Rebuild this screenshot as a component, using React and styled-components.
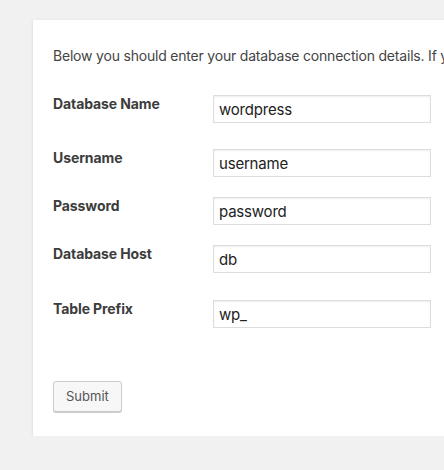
import React from 'react'
import styled, { createGlobalStyle } from 'styled-components'

const Global = createGlobalStyle`
  html { background: #f1f1f1; overflow: hidden; }
  body {
    margin: 0;
    font-family: Inter, "Noto Sans", "Liberation Sans", sans-serif;
    color: #444;
  }
`

const Page = styled.div`
  padding: 20px 0 0 33px;
  width: 1200px;
`

const Card = styled.form`
  background: #fff;
  width: 700px;
  padding: 20px 20px 10px;
  box-shadow: 0 1px 3px rgba(0, 0, 0, 0.13);
`

const Intro = styled.p`
  margin: 5px 0 0;
  font-size: 14px;
  line-height: 21px;
  letter-spacing: -0.2px;
  white-space: nowrap;
`

const Fields = styled.div`
  margin-top: 19px;
  display: flex;
  flex-direction: column;
`

const Row = styled.div`
  display: flex;
  align-items: flex-start;
  height: ${p => p.h}px;
  padding-top: 10px;
  box-sizing: border-box;
`

const Label = styled.label`
  width: 160px;
  flex: none;
  font-size: 14px;
  line-height: 17px;
  font-weight: 700;
  letter-spacing: -0.1px;
  color: #3c3c3c;
`

const Input = styled.input`
  width: 218px;
  box-sizing: border-box;
  height: 28px;
  margin: 0;
  padding: 3px 5px;
  font-family: inherit;
  font-size: 15px;
  line-height: 20px;
  letter-spacing: -0.2px;
  color: #222;
  background: #fff;
  border: 1px solid #ddd;
  border-radius: 0;
  box-shadow: inset 0 1px 2px rgba(0, 0, 0, 0.07);
  outline: none;
`

const Step = styled.div`
  margin: 43px 0 14px;
`

const Button = styled.button`
  height: 31px;
  padding: 0 12px 2px;
  font-family: inherit;
  font-size: 13px;
  line-height: 28px;
  color: #555;
  background: #f7f7f7;
  border: 1px solid #ccc;
  border-radius: 3px;
  box-shadow: 0 1px 0 #ccc;
  cursor: pointer;
`

const fields = [
  { label: 'Database Name', value: 'wordpress', h: 54 },
  { label: 'Username', value: 'username', h: 48 },
  { label: 'Password', value: 'password', h: 48 },
  { label: 'Database Host', value: 'db', h: 55 },
  { label: 'Table Prefix', value: 'wp_', h: 48 }
]

export default function App () {
  return (
    <Page>
      <Global />
      <Card onSubmit={e => e.preventDefault()}>
        <Intro>Below you should enter your database connection details. If you’re not sure about these, contact your host.</Intro>
        <Fields>
          {fields.map(f => (
            <Row key={f.label} h={f.h}>
              <Label>{f.label}</Label>
              <Input type='text' defaultValue={f.value} />
            </Row>
          ))}
        </Fields>
        <Step>
          <Button type='submit'>Submit</Button>
        </Step>
      </Card>
    </Page>
  )
}
